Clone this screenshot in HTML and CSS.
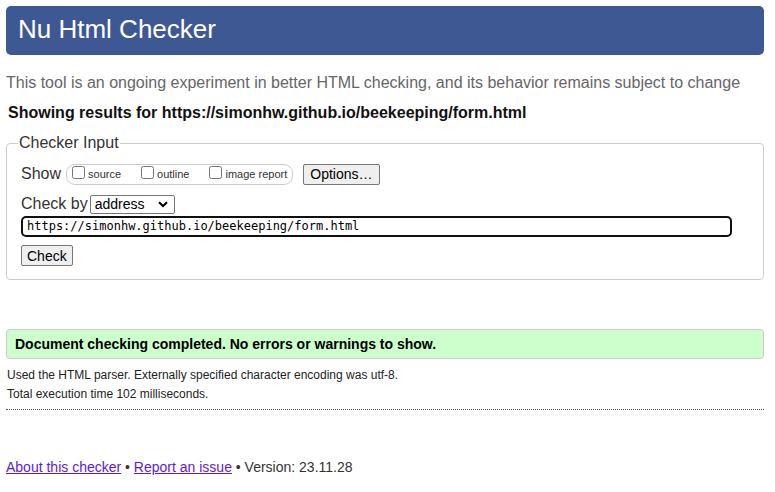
FILE: index.html
```html
<!DOCTYPE html>
<html>
<head>
<meta charset="utf-8">
<title>Nu Html Checker</title>
<link rel="stylesheet" href="styles.css">
</head>
<body>
<h1 class="title">Nu Html Checker</h1>
<p class="intro">This tool is an ongoing experiment in better HTML checking, and its behavior remains subject to change</p>
<p class="showing">Showing results for https://simonhw.github.io/beekeeping/form.html</p>
<form class="input-form">
  <fieldset class="checker">
    <legend class="legend">Checker Input</legend>
    <div class="row">
      <span class="label">Show</span>
      <span class="opts">
        <label class="opt"><input type="checkbox" class="cb"><span>source</span></label>
        <label class="opt"><input type="checkbox" class="cb"><span>outline</span></label>
        <label class="opt"><input type="checkbox" class="cb"><span>image report</span></label>
      </span>
      <button type="button" class="btn opt-btn">Options…</button>
    </div>
    <div class="row row2">
      <span class="label">Check by</span>
      <span class="select">address<svg class="chev" width="10" height="7" viewBox="0 0 10 7"><path d="M1 1.2 L5 5 L9 1.2" fill="none" stroke="#000" stroke-width="2"/></svg></span>
    </div>
    <div class="url">https://simonhw.github.io/beekeeping/form.html</div>
    <button type="button" class="btn check-btn">Check</button>
  </fieldset>
</form>
<div class="success">Document checking completed. No errors or warnings to show.</div>
<p class="details">Used the HTML parser. Externally specified character encoding was utf-8.</p>
<p class="details">Total execution time 102 milliseconds.</p>
<hr class="sep">
<p class="footer"><a href="#" class="lnk">About this checker</a> • <a href="#" class="lnk">Report an issue</a> • Version: 23.11.28</p>
</body>
</html>
```
FILE: styles.css
```css
html, body {
  margin: 0;
  padding: 0;
  background: #fff;
}
body {
  padding: 6px 11px 0 6px;
  font-family: "Liberation Sans", Arial, sans-serif;
  color: #222;
}
.title {
  margin: 0;
  height: 49px;
  box-sizing: border-box;
  background: #3e5893;
  border-radius: 5px;
  color: #fff;
  font-weight: normal;
  font-size: 26px;
  line-height: 46px;
  padding-left: 12px;
}
.intro {
  margin: 19px 0 0 0;
  font-size: 16px;
  line-height: 18px;
  color: #666;
}
.showing {
  margin: 12px 0 0 2px;
  font-size: 16px;
  line-height: 18px;
  font-weight: bold;
  color: #111;
}
.input-form {
  margin: 12px 0 0 0;
}
.checker {
  margin: 0;
  border: 1px solid #ccc;
  border-radius: 4px;
  padding: 11px 14px 13px 14px;
}
.legend {
  font-size: 16px;
  padding: 0 1px;
  margin-left: -3px;
  line-height: 18px;
  color: #333;
}
.row {
  display: flex;
  align-items: center;
  height: 22px;
}
.row2 {
  margin-top: 8px;
}
.label {
  font-size: 16px;
  color: #333;
}
.opts {
  display: inline-flex;
  align-items: center;
  margin-left: 5px;
  height: 19px;
  border: 1px solid #ccc;
  border-radius: 9px;
  padding: 0 5px 0 5px;
}
.opt {
  display: inline-flex;
  align-items: center;
  font-size: 11px;
  color: #333;
  margin-right: 20px;
}
.opt:last-child {
  margin-right: 0;
}
.cb {
  width: 13px;
  height: 13px;
  margin: 0 3px 0 0;
  position: relative;
  top: -2px;
}
.btn {
  font-family: "Liberation Sans", Arial, sans-serif;
  background: #efefef;
  border: 1px solid #767676;
  border-radius: 2px;
  color: #000;
  padding: 0 6px;
}
.opt-btn {
  margin-left: 10px;
  font-size: 14px;
  height: 21px;
  padding: 0 6px;
}
.select {
  display: inline-flex;
  align-items: center;
  justify-content: space-between;
  margin-left: 2px;
  width: 85px;
  height: 19px;
  box-sizing: border-box;
  border: 1px solid #767676;
  border-radius: 2px;
  padding: 0 6px 0 4px;
  font-size: 14px;
  color: #000;
}
.url {
  margin-top: 1px;
  width: 711px;
  height: 21px;
  box-sizing: border-box;
  border: 2px solid #101010;
  border-radius: 5px;
  font-family: "DejaVu Sans Mono", "Liberation Mono", monospace;
  font-size: 12px;
  line-height: 17px;
  padding-left: 4px;
  color: #000;
}
.check-btn {
  margin-top: 8px;
  height: 21px;
  font-size: 14px;
  padding: 0 5px;
}
.success {
  margin-top: 49px;
  height: 30px;
  box-sizing: border-box;
  background: #ccffcc;
  border: 1px solid #ccc;
  border-radius: 4px;
  font-size: 14px;
  font-weight: bold;
  line-height: 29px;
  padding-left: 8px;
  color: #000;
}
.details {
  margin: 10px 0 0 1px;
  font-size: 12px;
  line-height: 12px;
  color: #222;
}
.details + .details {
  margin-top: 7px;
}
.sep {
  margin: 9px 0 0 0;
  border: 0;
  border-top: 1px dotted #555;
  height: 0;
}
.footer {
  margin: 49px 0 0 0;
  font-size: 14px;
  line-height: 16px;
  color: #333;
}
.lnk {
  color: #5b1ae0;
  text-decoration: underline;
}
```
